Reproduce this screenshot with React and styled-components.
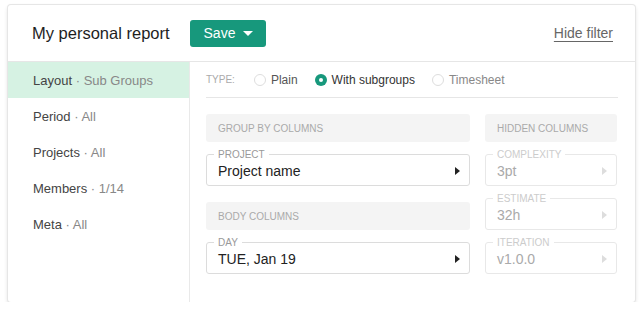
import React from 'react'
import styled, { createGlobalStyle } from 'styled-components'

const GlobalStyle = createGlobalStyle`
  body {
    margin: 0;
    background: #fff;
    font-family: "Liberation Sans", Arial, sans-serif;
  }
`

const Card = styled.div`
  margin: 5px 0 0 8px;
  width: 627px;
  height: 297px;
  box-sizing: border-box;
  border-radius: 3px;
  background: #fff;
  box-shadow: 0 0 0 1px #e6e6e6, 0 2px 4px rgba(0, 0, 0, 0.16);
  display: flex;
  flex-direction: column;
  overflow: hidden;
`

const Header = styled.div`
  height: 57px;
  box-sizing: border-box;
  border-bottom: 1px solid #e6e6e6;
  display: flex;
  align-items: center;
  padding: 0 22px 0 24px;
`

const Title = styled.h1`
  margin: 0;
  font-size: 16.5px;
  font-weight: 400;
  color: #1e1e1e;
  width: 158px;
`

const SaveButton = styled.button`
  width: 76px;
  height: 27px;
  border: 0;
  border-radius: 3px;
  background: #17987c;
  color: #fff;
  font-family: inherit;
  font-size: 14px;
  display: flex;
  align-items: center;
  justify-content: center;
  gap: 8px;
  padding: 0 0 0 1px;
`

const Caret = styled.span`
  width: 0;
  height: 0;
  border-left: 5px solid transparent;
  border-right: 5px solid transparent;
  border-top: 5px solid #fff;
`

const HideLink = styled.a`
  margin-left: auto;
  font-size: 14px;
  color: #666;
  text-decoration: underline;
  text-underline-offset: 3px;
`

const Body = styled.div`
  flex: 1;
  display: flex;
`

const Sidebar = styled.nav`
  width: 181px;
  border-right: 1px solid #e9e9e9;
`

const NavItem = styled.div`
  height: 36px;
  display: flex;
  align-items: center;
  padding-left: 25px;
  font-size: 13px;
  color: #444;
  background: ${p => (p.$active ? '#d6f2e3' : 'transparent')};
  span {
    color: #888;
  }
`

const Content = styled.div`
  flex: 1;
  padding: 0 17px 0 16px;
`

const TypeRow = styled.div`
  height: 35px;
  border-bottom: 1px solid #e6e6e6;
  display: flex;
  align-items: center;
  font-size: 12px;
`

const TypeLabel = styled.span`
  font-size: 10px;
  color: #aaa;
  margin-right: 19px;
`

const RadioOption = styled.label`
  display: flex;
  align-items: center;
  gap: 5px;
  margin-right: 17px;
  color: ${p => (p.$checked ? '#333' : p.$muted ? '#888' : '#555')};
`

const RadioDot = styled.span`
  width: 12px;
  height: 12px;
  box-sizing: border-box;
  border-radius: 50%;
  border: ${p => (p.$checked ? '0' : '1px solid #ddd')};
  background: ${p => (p.$checked ? '#17987c' : '#fff')};
  display: flex;
  align-items: center;
  justify-content: center;
  &::after {
    content: '';
    width: 4px;
    height: 4px;
    border-radius: 50%;
    background: ${p => (p.$checked ? '#fff' : 'transparent')};
  }
`

const Columns = styled.div`
  display: flex;
  gap: 15px;
  padding-top: 16px;
`

const Column = styled.div`
  width: ${p => p.$width}px;
  display: flex;
  flex-direction: column;
`

const SectionTitle = styled.div`
  height: 28px;
  border-radius: 3px;
  background: #f4f4f4;
  display: flex;
  align-items: center;
  padding-left: 12px;
  font-size: 10px;
  color: #aaa;
  margin-top: ${p => p.$top || 0}px;
`

const Field = styled.div`
  position: relative;
  height: 32px;
  box-sizing: border-box;
  border: 1px solid ${p => (p.$disabled ? '#e8e8e8' : '#dcdcdc')};
  border-radius: 3px;
  display: flex;
  align-items: center;
  padding: 1px 9px 0 11px;
  margin-top: ${p => p.$top}px;
  font-size: 14px;
  color: ${p => (p.$disabled ? '#aaa' : '#222')};
`

const Legend = styled.span`
  position: absolute;
  top: -6px;
  left: 7px;
  padding: 0 4px;
  background: #fff;
  font-size: 10px;
  line-height: 11px;
  color: ${p => (p.$disabled ? '#ccc' : '#999')};
`

const Arrow = styled.span`
  margin-left: auto;
  width: 0;
  height: 0;
  border-top: 4px solid transparent;
  border-bottom: 4px solid transparent;
  border-left: 5px solid ${p => (p.$disabled ? '#ddd' : '#222')};
`

const SelectField = ({ label, value, top, disabled }) => (
  <Field $top={top} $disabled={disabled}>
    <Legend $disabled={disabled}>{label}</Legend>
    {value}
    <Arrow $disabled={disabled} />
  </Field>
)

const navItems = [
  ['Layout', 'Sub Groups'],
  ['Period', 'All'],
  ['Projects', 'All'],
  ['Members', '1/14'],
  ['Meta', 'All'],
]

const App = () => (
  <>
    <GlobalStyle />
    <Card>
      <Header>
        <Title>My personal report</Title>
        <SaveButton>
          Save <Caret />
        </SaveButton>
        <HideLink>Hide filter</HideLink>
      </Header>
      <Body>
        <Sidebar>
          {navItems.map(([name, value], i) => (
            <NavItem key={name} $active={i === 0}>
              {name}&nbsp;<span>· {value}</span>
            </NavItem>
          ))}
        </Sidebar>
        <Content>
          <TypeRow>
            <TypeLabel>TYPE:</TypeLabel>
            <RadioOption>
              <RadioDot />
              Plain
            </RadioOption>
            <RadioOption $checked>
              <RadioDot $checked />
              With subgroups
            </RadioOption>
            <RadioOption $muted>
              <RadioDot />
              Timesheet
            </RadioOption>
          </TypeRow>
          <Columns>
            <Column $width={264}>
              <SectionTitle>GROUP BY COLUMNS</SectionTitle>
              <SelectField label="PROJECT" value="Project name" top={12} />
              <SectionTitle $top={16}>BODY COLUMNS</SectionTitle>
              <SelectField label="DAY" value="TUE, Jan 19" top={12} />
            </Column>
            <Column $width={132}>
              <SectionTitle>HIDDEN COLUMNS</SectionTitle>
              <SelectField label="COMPLEXITY" value="3pt" top={12} disabled />
              <SelectField label="ESTIMATE" value="32h" top={12} disabled />
              <SelectField label="ITERATION" value="v1.0.0" top={12} disabled />
            </Column>
          </Columns>
        </Content>
      </Body>
    </Card>
  </>
)

export default App
